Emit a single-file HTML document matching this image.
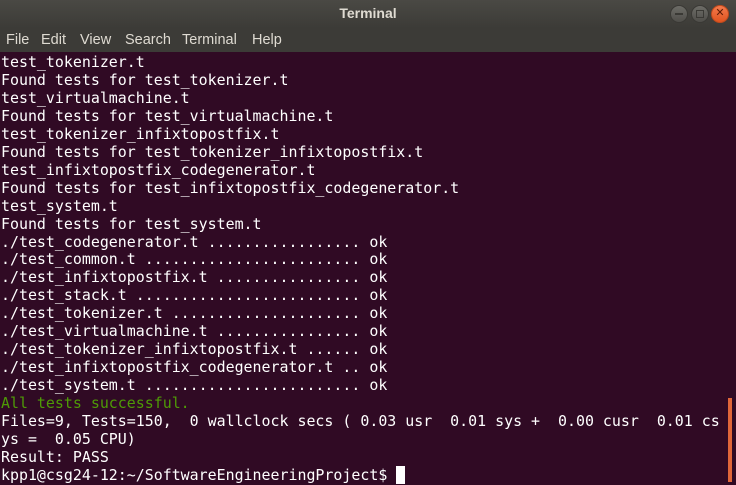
<!DOCTYPE html>
<html><head><style>
body{margin:0;width:736px;height:482px;overflow:hidden;background:#300a24;font-family:"Liberation Sans",sans-serif}
#title{position:absolute;top:0;left:0;width:736px;height:28px;background:linear-gradient(#4a4944,#3c3b37);color:#dfdbd2;font-weight:bold;font-size:14px;text-align:center;line-height:26px}
#menu{position:absolute;top:28px;left:0;width:736px;height:24px;background:#3c3b37;color:#dfdbd2;font-size:14.5px;line-height:24px}
#menu span{position:absolute;top:0}
.b{position:absolute;top:5px;width:16px;height:16px;border-radius:50%;background:linear-gradient(#6d6c67,#4f4e4a);border:1px solid #3a3935}
#term{position:absolute;top:54px;left:1px;font-family:"DejaVu Sans Mono",monospace;font-size:14.93px;line-height:17.95px;color:#fff;white-space:pre}
.g{color:#4e9a06}
#sb{position:absolute;left:728px;top:398px;width:4px;height:84px;background:#e0663a}
</style></head><body>
<div id="title">Terminal
<div class="b" style="left:670px"><div style="position:absolute;left:4px;top:7px;width:8px;height:2px;background:#3a3935"></div></div>
<div class="b" style="left:691px"><div style="position:absolute;left:4px;top:4px;width:6px;height:6px;border:1px solid #3a3935"></div></div>
<div class="b" style="left:711px;background:linear-gradient(#f37a4c,#e05420);border-color:#c04a1c;color:#5a1a05;font-size:11px;line-height:15px;text-align:center;font-weight:normal">✕</div>
</div>
<div id="menu"><span style="left:6px">File</span><span style="left:41px">Edit</span><span style="left:80px">View</span><span style="left:125px">Search</span><span style="left:182px">Terminal</span><span style="left:252px">Help</span></div>
<div id="term">test_tokenizer.t
Found tests for test_tokenizer.t
test_virtualmachine.t
Found tests for test_virtualmachine.t
test_tokenizer_infixtopostfix.t
Found tests for test_tokenizer_infixtopostfix.t
test_infixtopostfix_codegenerator.t
Found tests for test_infixtopostfix_codegenerator.t
test_system.t
Found tests for test_system.t
./test_codegenerator.t ................. ok
./test_common.t ........................ ok
./test_infixtopostfix.t ................ ok
./test_stack.t ......................... ok
./test_tokenizer.t ..................... ok
./test_virtualmachine.t ................ ok
./test_tokenizer_infixtopostfix.t ...... ok
./test_infixtopostfix_codegenerator.t .. ok
./test_system.t ........................ ok
<span class="g">All tests successful.</span>
Files=9, Tests=150,  0 wallclock secs ( 0.03 usr  0.01 sys +  0.00 cusr  0.01 cs
ys =  0.05 CPU)
Result: PASS
kpp1@csg24-12:~/SoftwareEngineeringProject$ <span style="background:#fff">&nbsp;</span></div>
<div id="sb"></div>
</body></html>
